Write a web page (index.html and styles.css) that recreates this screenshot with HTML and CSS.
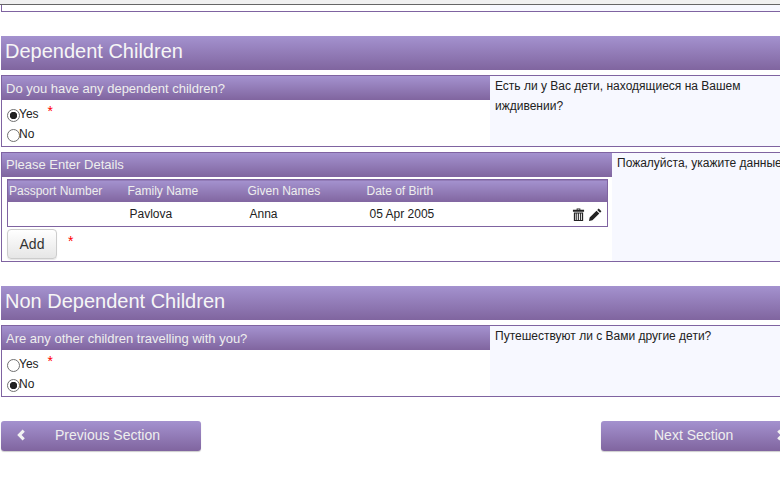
FILE: index.html
```html
<!DOCTYPE html>
<html lang="en">
<head>
    <meta charset="UTF-8">
    <meta name="viewport" content="width=device-width, initial-scale=1.0">
    <title>Dependent Children</title>
    <link rel="stylesheet" href="styles.css">
</head>
<body>
    <div class="topbar"></div>
    <div class="page">
        <div class="panel panel-cut">
            <div class="panel-main"></div>
            <div class="panel-side"></div>
        </div>

        <h2 class="section-title">Dependent Children</h2>
        <div class="panel">
            <div class="panel-main">
                <div class="panel-title">Do you have any dependent children?</div>
                <div class="radio-group">
                    <label class="radio-row"><input type="radio" name="dependent" checked>Yes<span class="required">*</span></label>
                    <label class="radio-row"><input type="radio" name="dependent">No</label>
                </div>
            </div>
            <div class="panel-side">Есть ли у Вас дети, находящиеся на Вашем иждивении?</div>
        </div>

        <div class="panel panel-wide">
            <div class="panel-main">
                <div class="panel-title panel-title-sm">Please Enter Details</div>
                <table class="details">
                    <thead>
                        <tr>
                            <th>Passport Number</th>
                            <th>Family Name</th>
                            <th>Given Names</th>
                            <th>Date of Birth</th>
                            <th></th>
                        </tr>
                    </thead>
                    <tbody>
                        <tr>
                            <td></td>
                            <td>Pavlova</td>
                            <td>Anna</td>
                            <td>05 Apr 2005</td>
                            <td class="actions">
                                <svg class="icon" viewBox="0 0 14 14" aria-label="Delete">
                                    <path d="M5 0.5h4v1.5h4v2h-12v-2h4zM6 1.4v.6h2v-.6z"/>
                                    <path fill-rule="evenodd" d="M2 4.8h10v9.2h-10zM3.6 6v6.8h1v-6.8zM5.6 6v6.8h1v-6.8zM7.6 6v6.8h1v-6.8zM9.6 6v6.8h1v-6.8z"/>
                                </svg>
                                <svg class="icon" viewBox="0 0 14 14" aria-label="Edit">
                                    <path d="M10.4 0.6l3 3-1.5 1.5-3-3zM8.1 2.9l3 3-7.4 7.4-3.7.7.7-3.7z"/>
                                </svg>
                            </td>
                        </tr>
                    </tbody>
                </table>
                <div class="add-row">
                    <button class="btn-add" type="button">Add</button>
                    <span class="required">*</span>
                </div>
            </div>
            <div class="panel-side">Пожалуйста, укажите данные</div>
        </div>

        <h2 class="section-title">Non Dependent Children</h2>
        <div class="panel">
            <div class="panel-main">
                <div class="panel-title">Are any other children travelling with you?</div>
                <div class="radio-group">
                    <label class="radio-row"><input type="radio" name="other">Yes<span class="required">*</span></label>
                    <label class="radio-row"><input type="radio" name="other" checked>No</label>
                </div>
            </div>
            <div class="panel-side">Путешествуют ли с Вами другие дети?</div>
        </div>

        <div class="nav-buttons">
            <button class="btn-nav btn-prev" type="button">
                <svg class="chevron" viewBox="0 0 10 12"><path d="M6.6 0.6l2.2 2.2-3.2 3.2 3.2 3.2-2.2 2.2-5.4-5.4z"/></svg>
                Previous Section
            </button>
            <button class="btn-nav btn-next" type="button">
                Next Section
                <svg class="chevron" viewBox="0 0 10 12"><path d="M3.4 0.6l-2.2 2.2 3.2 3.2-3.2 3.2 2.2 2.2 5.4-5.4z"/></svg>
            </button>
        </div>
    </div>
</body>
</html>
```

FILE: styles.css
```css
html, body {
    margin: 0;
    padding: 0;
    height: 486px;
    overflow: hidden;
    background: white;
}
body {
    font-family: "Liberation Sans", Arial, sans-serif;
    font-size: 12px;
    color: #222;
}
.topbar {
    height: 4px;
    background: #f0f0f0;
    border-bottom: 1px solid #666;
}
.page {
    width: 800px;
    margin-left: 1px;
}
.panel {
    display: grid;
    grid-template-columns: 488px 1fr;
    border: 1px solid #7f63a1;
    border-right: none;
    margin-bottom: 5px;
}
.panel-wide {
    grid-template-columns: 610px 1fr;
    margin-bottom: 24px;
}
.panel-cut {
    height: 6px;
    border-top: none;
    margin-bottom: 24px;
}
.panel-side {
    background: #f7f8ff;
    padding: 0 5px;
    line-height: 20px;
    color: #222;
}
.section-title {
    height: 34px;
    margin: 0 0 5px;
    padding-left: 4px;
    font-size: 20px;
    font-weight: normal;
    line-height: 30px;
    color: #f6f6f6;
    background: linear-gradient(#a492cf, #80659f);
}
.panel-title {
    height: 24px;
    padding-left: 4px;
    font-size: 13px;
    line-height: 25px;
    color: #eee;
    background: linear-gradient(#a492cf, #80659f);
}
.panel-title-sm {
    line-height: 24px;
}
.radio-group {
    padding: 4px 0 2px 5px;
}
.radio-row {
    display: flex;
    height: 20px;
    line-height: 20px;
}
.radio-row input {
    appearance: none;
    width: 13px;
    height: 13px;
    margin: 5px -1px 0 0;
    border: 1px solid #707070;
    border-radius: 50%;
    background: white;
}
.radio-row input:checked {
    background: radial-gradient(circle, #222 0, #222 3.4px, white 4px);
}
.required {
    color: red;
    font-size: 14px;
    line-height: 14px;
    margin-left: 9px;
}
.details {
    width: 600px;
    margin: 2px 0 0 5px;
    border: 1px solid #7f63a1;
    border-collapse: collapse;
    table-layout: fixed;
}
.details th {
    box-sizing: border-box;
    width: 120px;
    height: 22px;
    padding: 0;
    font-weight: normal;
    text-align: left;
    color: #eee;
    background: linear-gradient(#a492cf, #80659f);
}
.details th:first-child {
    padding-left: 1px;
}
.details th:nth-child(4) {
    text-indent: -1px;
}
.details td {
    height: 24px;
    padding: 0 2px;
}
.details .actions {
    padding: 0 5px 0 0;
    text-align: right;
    white-space: nowrap;
}
.icon {
    width: 13px;
    height: 13px;
    margin-left: 1px;
    vertical-align: middle;
    fill: #222;
}
.add-row {
    display: flex;
    margin: 2px 0 2px 5px;
}
.btn-add {
    width: 50px;
    height: 30px;
    padding: 0;
    font-family: inherit;
    font-size: 14px;
    color: #333;
    border: 1px solid #ccc;
    border-radius: 4px;
    background: linear-gradient(#fff, #e6e6e6);
    box-shadow: 0 1px 1px rgba(0,0,0,0.1);
}
.add-row .required {
    margin: 5px 0 0 11px;
}
.nav-buttons {
    display: flex;
    justify-content: space-between;
    margin-top: 24px;
}
.btn-nav {
    display: flex;
    align-items: center;
    width: 200px;
    height: 30px;
    padding: 0 15px 2px;
    font-family: inherit;
    font-size: 14px;
    color: #eee;
    border: none;
    border-radius: 3px;
    background: linear-gradient(#a492cf, #80659f);
    box-shadow: 0 1px 1px rgba(0,0,0,0.2);
}
.btn-next {
    padding-left: 53px;
    justify-content: space-between;
}
.chevron {
    width: 10px;
    height: 12px;
    margin-right: 29px;
    fill: #f2f2f2;
}
.btn-next .chevron {
    margin-right: 0;
}
```
